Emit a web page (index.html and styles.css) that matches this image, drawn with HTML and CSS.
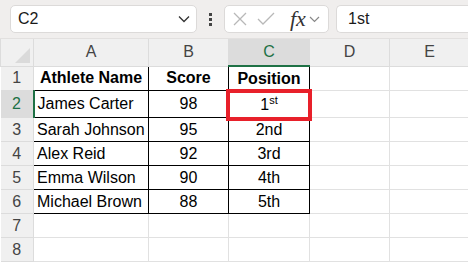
FILE: index.html
```html
<!DOCTYPE html>
<html lang="en">
<head>
    <meta charset="UTF-8">
    <title>Sheet</title>
    <link rel="stylesheet" href="styles.css">
</head>
<body>

<div class="toolbar">
    <div class="name-box">
        <span>C2</span>
        <svg class="chev" width="12" height="8" viewBox="0 0 12 8"><path d="M1 1.5 L6 6.5 L11 1.5" fill="none" stroke="#333" stroke-width="1.3"/></svg>
    </div>
    <div class="dots"><i></i><i></i><i></i></div>
    <div class="fx-box">
        <svg width="16" height="16" viewBox="0 0 16 16"><path d="M2 2 L14 14 M14 2 L2 14" stroke="#b8b8b8" stroke-width="1.3"/></svg>
        <svg width="18" height="16" viewBox="0 0 18 16"><path d="M1 8 L6 13 L17 2" fill="none" stroke="#b8b8b8" stroke-width="1.3"/></svg>
        <span class="fx">fx</span>
        <svg width="11" height="7" viewBox="0 0 11 7"><path d="M1 1 L5.5 5.5 L10 1" fill="none" stroke="#888" stroke-width="1.2"/></svg>
    </div>
    <div class="formula">1st</div>
</div>

<table class="sheet">
    <colgroup>
        <col class="w-rh"><col class="w-a"><col class="w-b"><col class="w-c"><col class="w-d"><col class="w-e">
    </colgroup>
    <tr class="col-heads">
        <th class="corner"><span class="tri"></span></th>
        <th>A</th><th>B</th><th class="sel">C</th><th>D</th><th>E</th>
    </tr>
    <tr>
        <th class="rh">1</th>
        <td class="box head">Athlete Name</td><td class="box head">Score</td><td class="box head">Position</td><td></td><td></td>
    </tr>
    <tr class="tall">
        <th class="rh sel">2</th>
        <td class="box name">James Carter</td><td class="box">98</td>
        <td class="box active">1<sup>st</sup><span class="hilite"></span></td><td></td><td></td>
    </tr>
    <tr>
        <th class="rh">3</th>
        <td class="box name">Sarah Johnson</td><td class="box">95</td><td class="box">2nd</td><td></td><td></td>
    </tr>
    <tr>
        <th class="rh">4</th>
        <td class="box name">Alex Reid</td><td class="box">92</td><td class="box">3rd</td><td></td><td></td>
    </tr>
    <tr>
        <th class="rh">5</th>
        <td class="box name">Emma Wilson</td><td class="box">90</td><td class="box">4th</td><td></td><td></td>
    </tr>
    <tr>
        <th class="rh">6</th>
        <td class="box name">Michael Brown</td><td class="box">88</td><td class="box">5th</td><td></td><td></td>
    </tr>
    <tr>
        <th class="rh">7</th>
        <td></td><td></td><td></td><td></td><td></td>
    </tr>
    <tr>
        <th class="rh">8</th>
        <td></td><td></td><td></td><td></td><td></td>
    </tr>
</table>

</body>
</html>
```

FILE: styles.css
```css
body {
    margin: 0;
    width: 468px;
    height: 264px;
    overflow: hidden;
    background: #fff;
    font-family: "Liberation Sans", Arial, sans-serif;
}
.toolbar {
    height: 39px;
    background: #f0eeed;
    display: flex;
    align-items: center;
    padding: 0 0 0 10px;
    box-sizing: border-box;
    border-bottom: 1px solid #e2e0df;
}
.name-box {
    width: 187px;
    height: 28px;
    box-sizing: border-box;
    background: #fff;
    border: 1px solid #dcdad9;
    border-radius: 5px;
    display: flex;
    align-items: center;
    justify-content: space-between;
    padding: 0 6px 0 7px;
    font-size: 16px;
    color: #1a1a1a;
}
.dots {
    width: 27px;
    display: flex;
    flex-direction: column;
    align-items: center;
    gap: 2px;
}
.dots i {
    width: 3px;
    height: 3px;
    background: #444;
}
.fx-box {
    width: 105px;
    height: 28px;
    box-sizing: border-box;
    background: #fff;
    border: 1px solid #dcdad9;
    border-radius: 5px;
    display: flex;
    align-items: center;
    gap: 9px;
    padding: 0 5px 0 7px;
}
.fx {
    font-family: "Liberation Serif", serif;
    font-style: italic;
    font-size: 22px;
    color: #333;
    margin-left: 6px;
    margin-right: -6px;
    line-height: 1;
}
.formula {
    flex: 1;
    height: 28px;
    box-sizing: border-box;
    margin-left: 7px;
    background: #fff;
    border: 1px solid #dcdad9;
    border-right: none;
    border-radius: 5px 0 0 5px;
    display: flex;
    align-items: center;
    padding-left: 11px;
    font-size: 16px;
    color: #1a1a1a;
}
.sheet {
    border-collapse: collapse;
    table-layout: fixed;
    width: 469px;
    font-size: 16px;
}
.w-rh { width: 33px; }
.w-a { width: 115px; }
.w-b { width: 80px; }
.w-c { width: 81px; }
.w-d { width: 80px; }
.w-e { width: 80px; }
.sheet td, .sheet th {
    height: 23px;
    padding: 0;
    border: 1px solid #e1e1e1;
    text-align: center;
    color: #000;
    white-space: nowrap;
    overflow: hidden;
}
.sheet tr.tall td, .sheet tr.tall th {
    height: 26px;
}
.col-heads th {
    height: 26px;
    background: #f0f0f0;
    font-weight: normal;
    color: #444;
    border-color: #dcdcdc;
    border-top: none;
}
.col-heads th.sel {
    background: #dcdcdc;
    color: #1e7145;
    border-bottom: 2px solid #1e7145;
}
.corner {
    position: relative;
}
.tri {
    position: absolute;
    right: 3px;
    bottom: 3px;
    width: 0;
    height: 0;
    border-left: 15px solid transparent;
    border-bottom: 15px solid #dadada;
}
.sheet th.rh {
    background: #f0f0f0;
    font-weight: normal;
    color: #444;
    border-color: #dcdcdc;
    border-left: none;
}
.sheet th.rh.sel {
    background: #dcdcdc;
    color: #1e7145;
    border-right: 2px solid #1e7145;
}
.sheet td.box {
    border: 1px solid #000;
}
.sheet td.head {
    font-weight: bold;
}
.sheet td.name {
    text-align: left;
    padding-left: 3px;
}
.sheet td.active {
    position: relative;
    overflow: visible;
}
.active sup {
    font-size: 11px;
    vertical-align: 6px;
}
.hilite {
    position: absolute;
    left: -3px;
    top: -2px;
    right: -3px;
    bottom: -4px;
    border: 4px solid #e8202a;
}
```
